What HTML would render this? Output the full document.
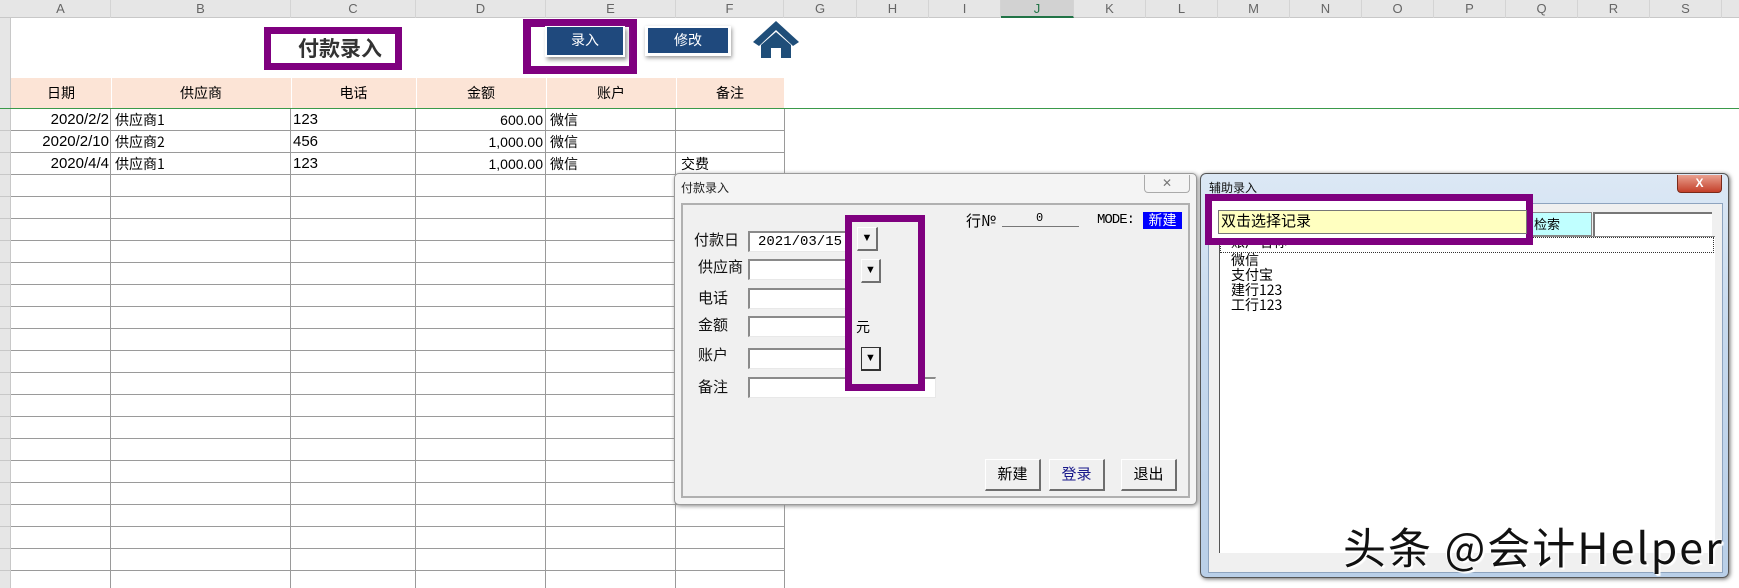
<!DOCTYPE html>
<html><head><meta charset="utf-8"><style>
*{margin:0;padding:0;box-sizing:border-box}
body{width:1739px;height:588px;overflow:hidden;background:#fff;position:relative;font-family:"Liberation Sans","Noto Sans CJK SC",sans-serif;}
.a{position:absolute}
.ch{position:absolute;top:0;height:18px;border-right:1px solid #d4d4d4;color:#666;font-size:13px;text-align:center;line-height:17px}
.cell{position:absolute;font-size:15px;line-height:22px;color:#000;white-space:nowrap}
.lbl{position:absolute;font-size:15px;font-family:"Noto Sans CJK SC",sans-serif;color:#111;line-height:20px}
.inp{position:absolute;background:#fff;border-top:2px solid #8a8a8a;border-left:2px solid #8a8a8a;border-bottom:1px solid #e8e8e8;border-right:1px solid #e8e8e8}
.dd{position:absolute;background:#f0f0f0;border:1px solid #fff;border-right:2px solid #707070;border-bottom:2px solid #707070;font-size:11px;text-align:center;line-height:20px}
.btn{position:absolute;background:#f0f0f0;border:1px solid #fff;border-right:2px solid #6e6e6e;border-bottom:2px solid #6e6e6e;font-size:15px;text-align:center;line-height:28px;font-family:"Noto Sans CJK SC",sans-serif}
.li{position:absolute;left:1231px;font-size:14px;font-family:"WenQuanYi Zen Hei","Noto Sans CJK SC",sans-serif;line-height:15px}
</style></head><body>
<div class="a" style="left:0;top:0;width:1739px;height:18px;background:#e6e6e6;border-bottom:1px solid #c8c8c8"></div>
<div class="a" style="left:0;top:18px;width:11px;height:570px;background:#e6e6e6;border-right:1px solid #c8c8c8"></div>
<div class="ch" style="left:11px;width:100px">A</div>
<div class="ch" style="left:111px;width:180px">B</div>
<div class="ch" style="left:291px;width:125px">C</div>
<div class="ch" style="left:416px;width:130px">D</div>
<div class="ch" style="left:546px;width:130px">E</div>
<div class="ch" style="left:676px;width:108px">F</div>
<div class="ch" style="left:784px;width:73px">G</div>
<div class="ch" style="left:857px;width:72px">H</div>
<div class="ch" style="left:929px;width:72px">I</div>
<div class="ch" style="left:1001px;width:73px;background:#d2d2d2;border-bottom:2px solid #217346;color:#217346">J</div>
<div class="ch" style="left:1074px;width:72px">K</div>
<div class="ch" style="left:1146px;width:72px">L</div>
<div class="ch" style="left:1218px;width:72px">M</div>
<div class="ch" style="left:1290px;width:72px">N</div>
<div class="ch" style="left:1362px;width:72px">O</div>
<div class="ch" style="left:1434px;width:72px">P</div>
<div class="ch" style="left:1506px;width:72px">Q</div>
<div class="ch" style="left:1578px;width:72px">R</div>
<div class="ch" style="left:1650px;width:72px">S</div>

<div class="a" style="left:264px;top:27px;width:138px;height:43px;border:7px solid #7f007f;background:#fff"></div>
<div class="a" style="left:298px;top:34px;font-size:21px;font-weight:bold;color:#333;font-family:'Noto Sans CJK SC',sans-serif;line-height:28px">付款录入</div>
<div class="a" style="left:523px;top:19px;width:114px;height:55px;border:8px solid #7f007f"></div>
<div class="a" style="left:545px;top:26px;width:80px;height:31px;background:#fff;box-shadow:2px 3px 4px #999"></div>
<div class="a" style="left:547px;top:27px;width:76px;height:28px;background:#1f497d;color:#fff;font-size:14px;text-align:center;line-height:26px;font-family:'Noto Sans CJK SC',sans-serif">录入</div>
<div class="a" style="left:645px;top:26px;width:86px;height:30px;background:#fff;box-shadow:1px 2px 4px #999"></div>
<div class="a" style="left:648px;top:28px;width:80px;height:25px;background:#1f497d;color:#fff;font-size:14px;text-align:center;line-height:24px;font-family:'Noto Sans CJK SC',sans-serif">修改</div>
<svg class="a" style="left:751px;top:19px" width="50" height="40" viewBox="0 0 50 40"><path d="M25 2 L2 23 L8 27 L25 11 L42 27 L48 23 Z" fill="#1f4e79"/><path d="M10 26 L25 13 L40 26 L40 39 L30 39 L30 29 L20 29 L20 39 L10 39 Z" fill="#1f4e79"/></svg>

<div class="a" style="left:11px;top:78px;width:773px;height:31px;background:#fce4d6"></div>
<div class="a" style="left:11px;top:78px;width:100px;text-align:center;font-size:14px;line-height:31px;font-family:'Noto Sans CJK SC',sans-serif">日期</div>
<div class="a" style="left:111px;top:78px;width:180px;text-align:center;font-size:14px;line-height:31px;font-family:'Noto Sans CJK SC',sans-serif">供应商</div>
<div class="a" style="left:291px;top:78px;width:125px;text-align:center;font-size:14px;line-height:31px;font-family:'Noto Sans CJK SC',sans-serif">电话</div>
<div class="a" style="left:416px;top:78px;width:130px;text-align:center;font-size:14px;line-height:31px;font-family:'Noto Sans CJK SC',sans-serif">金额</div>
<div class="a" style="left:546px;top:78px;width:130px;text-align:center;font-size:14px;line-height:31px;font-family:'Noto Sans CJK SC',sans-serif">账户</div>
<div class="a" style="left:676px;top:78px;width:108px;text-align:center;font-size:14px;line-height:31px;font-family:'Noto Sans CJK SC',sans-serif">备注</div>
<div class="a" style="left:111px;top:78px;width:1px;height:31px;background:#fff"></div>
<div class="a" style="left:291px;top:78px;width:1px;height:31px;background:#fff"></div>
<div class="a" style="left:416px;top:78px;width:1px;height:31px;background:#fff"></div>
<div class="a" style="left:546px;top:78px;width:1px;height:31px;background:#fff"></div>
<div class="a" style="left:676px;top:78px;width:1px;height:31px;background:#fff"></div>
<div class="a" style="left:0;top:108px;width:1739px;height:1px;background:#3a9a4a"></div>

<div class="a" style="left:11px;top:109px;width:774px;height:479px;
background-image:linear-gradient(to bottom,transparent 21px,#9a9a9a 21px);background-size:100% 22px;"></div>
<div class="a" style="left:110px;top:109px;width:1px;height:479px;background:#9a9a9a"></div>
<div class="a" style="left:290px;top:109px;width:1px;height:479px;background:#9a9a9a"></div>
<div class="a" style="left:415px;top:109px;width:1px;height:479px;background:#9a9a9a"></div>
<div class="a" style="left:545px;top:109px;width:1px;height:479px;background:#9a9a9a"></div>
<div class="a" style="left:675px;top:109px;width:1px;height:479px;background:#9a9a9a"></div>
<div class="a" style="left:784px;top:109px;width:1px;height:479px;background:#9a9a9a"></div>
<div class="a" style="left:0;top:109px;width:11px;height:479px;background-image:linear-gradient(to bottom,transparent 21px,#c8c8c8 21px);background-size:100% 22px;"></div>

<div class="cell" style="left:11px;top:109px;width:98px;text-align:right">2020/2/2</div>
<div class="cell" style="left:115px;top:109px;font-family:'Noto Sans CJK SC',sans-serif;font-size:14px">供应商1</div>
<div class="cell" style="left:293px;top:109px">123</div>
<div class="cell" style="left:416px;top:109px;width:127px;text-align:right;font-size:14px">600.00</div>
<div class="cell" style="left:550px;top:109px;font-family:'Noto Sans CJK SC',sans-serif;font-size:14px">微信</div>
<div class="cell" style="left:11px;top:131px;width:98px;text-align:right">2020/2/10</div>
<div class="cell" style="left:115px;top:131px;font-family:'Noto Sans CJK SC',sans-serif;font-size:14px">供应商2</div>
<div class="cell" style="left:293px;top:131px">456</div>
<div class="cell" style="left:416px;top:131px;width:127px;text-align:right;font-size:14px">1,000.00</div>
<div class="cell" style="left:550px;top:131px;font-family:'Noto Sans CJK SC',sans-serif;font-size:14px">微信</div>
<div class="cell" style="left:11px;top:153px;width:98px;text-align:right">2020/4/4</div>
<div class="cell" style="left:115px;top:153px;font-family:'Noto Sans CJK SC',sans-serif;font-size:14px">供应商1</div>
<div class="cell" style="left:293px;top:153px">123</div>
<div class="cell" style="left:416px;top:153px;width:127px;text-align:right;font-size:14px">1,000.00</div>
<div class="cell" style="left:550px;top:153px;font-family:'Noto Sans CJK SC',sans-serif;font-size:14px">微信</div>
<div class="cell" style="left:681px;top:153px;font-family:'Noto Sans CJK SC',sans-serif;font-size:14px">交费</div>

<div class="a" style="left:674px;top:173px;width:523px;height:332px;background:#f4f4f4;border:1px solid #9a9a9a;border-radius:5px;box-shadow:1px 1px 4px #888"></div>
<div class="a" style="left:681px;top:179px;font-size:12px;font-family:'Noto Sans CJK SC',sans-serif;color:#222">付款录入</div>
<div class="a" style="left:1144px;top:175px;width:46px;height:18px;border:1px solid #aaa;border-top:none;border-radius:0 0 4px 4px;background:#f4f4f4;text-align:center;font-size:12px;color:#777;line-height:17px">✕</div>
<div class="a" style="left:681px;top:203px;width:509px;height:295px;background:#f0f0f0;border:2px solid #b0b0b0"></div>
<div class="lbl" style="left:694px;top:230px">付款日</div>
<div class="lbl" style="left:698px;top:257px">供应商</div>
<div class="lbl" style="left:698px;top:288px">电话</div>
<div class="lbl" style="left:698px;top:315px">金额</div>
<div class="lbl" style="left:698px;top:345px">账户</div>
<div class="lbl" style="left:698px;top:377px">备注</div>
<div class="inp" style="left:748px;top:231px;width:100px;height:21px"></div>
<div class="a" style="left:758px;top:233px;font-size:14px;font-family:'Liberation Mono',monospace;line-height:18px">2021/03/15</div>
<div class="inp" style="left:748px;top:259px;width:100px;height:21px"></div>
<div class="inp" style="left:748px;top:288px;width:100px;height:21px"></div>
<div class="inp" style="left:748px;top:316px;width:100px;height:21px"></div>
<div class="inp" style="left:748px;top:348px;width:100px;height:21px"></div>
<div class="inp" style="left:748px;top:377px;width:188px;height:21px"></div>
<div class="a" style="left:845px;top:215px;width:80px;height:176px;border:7px solid #7f007f;background:#f0f0f0"></div>
<div class="dd" style="left:857px;top:227px;width:21px;height:24px">▼</div>
<div class="dd" style="left:861px;top:259px;width:20px;height:24px">▼</div>
<div class="a" style="left:856px;top:317px;font-size:14px;font-family:'Noto Sans CJK SC',sans-serif">元</div>
<div class="dd" style="left:861px;top:347px;width:20px;height:24px;border:1px solid #333;border-right:2px solid #333;border-bottom:2px solid #333">▼</div>
<div class="a" style="left:966px;top:210px;font-size:15px;font-family:'Noto Sans CJK SC',sans-serif">行№</div>
<div class="a" style="left:1002px;top:226px;width:77px;height:1px;background:#777"></div>
<div class="a" style="left:1036px;top:211px;font-size:12px;font-family:'Liberation Mono',monospace">0</div>
<div class="a" style="left:1097px;top:212px;font-size:14px;font-family:'Liberation Mono',monospace;letter-spacing:-1px">MODE:</div>
<div class="a" style="left:1143px;top:212px;width:39px;height:17px;background:#0000ff;color:#fff;font-size:14px;text-align:center;line-height:17px;font-family:'Noto Sans CJK SC',sans-serif">新建</div>
<div class="btn" style="left:985px;top:459px;width:56px;height:32px">新建</div>
<div class="btn" style="left:1049px;top:459px;width:56px;height:32px;color:#1a1a8c">登录</div>
<div class="btn" style="left:1121px;top:459px;width:56px;height:32px">退出</div>

<div class="a" style="left:1200px;top:173px;width:529px;height:405px;border:1px solid #555;border-radius:6px;background:linear-gradient(#dce8f5,#c6d9ee 40%,#b9cfe8);box-shadow:1px 1px 4px #666"></div>
<div class="a" style="left:1209px;top:179px;font-size:12px;font-family:'Noto Sans CJK SC',sans-serif;color:#111">辅助录入</div>
<div class="a" style="left:1677px;top:175px;width:45px;height:18px;border:1px solid #7a2a1a;border-top:none;border-radius:0 0 4px 4px;background:linear-gradient(#e9a08f,#c4402a);color:#fff;font-weight:bold;text-align:center;font-size:12px;line-height:17px">X</div>
<div class="a" style="left:1208px;top:203px;width:515px;height:370px;background:#f0f0f0;border:1px solid #8ea4bf"></div>
<div class="a" style="left:1219px;top:236px;width:496px;height:317px;background:#fff;border-left:1px solid #555;border-top:1px solid #888"></div>
<div class="a" style="left:1220px;top:237px;width:494px;height:16px;border:1px dotted #333"></div>
<div class="li" style="top:241px;height:10px;overflow:hidden"><span style="position:relative;top:-6px">账户名称</span></div>
<div class="li" style="top:253px">微信</div>
<div class="li" style="top:268px">支付宝</div>
<div class="li" style="top:283px">建行123</div>
<div class="li" style="top:298px">工行123</div>
<div class="a" style="left:1527px;top:212px;width:65px;height:24px;background:#c0ffff;border:1px solid #888;font-size:13px;line-height:22px;padding-left:6px;font-family:'Noto Sans CJK SC',sans-serif">检索</div>
<div class="a" style="left:1593px;top:212px;width:119px;height:24px;background:#fff;border-top:2px solid #777;border-left:2px solid #777"></div>
<div class="a" style="left:1205px;top:194px;width:328px;height:51px;border:7px solid #7f007f;background:#fff"></div>
<div class="a" style="left:1218px;top:210px;width:309px;height:24px;background:#ffffc0;border:1px solid #777;font-size:15px;line-height:20px;padding-left:2px;font-family:'WenQuanYi Zen Hei','Noto Sans CJK SC',sans-serif">双击选择记录</div>
<div class="a" style="left:1343px;top:520px;font-size:43px;color:#111;font-family:'Noto Sans CJK SC',sans-serif;line-height:52px;letter-spacing:2px;text-shadow:1px 1px 0 #fff,-1px -1px 0 #fff,2px 2px 1px #fff;white-space:nowrap">头条 @会计Helper</div>
</body></html>
